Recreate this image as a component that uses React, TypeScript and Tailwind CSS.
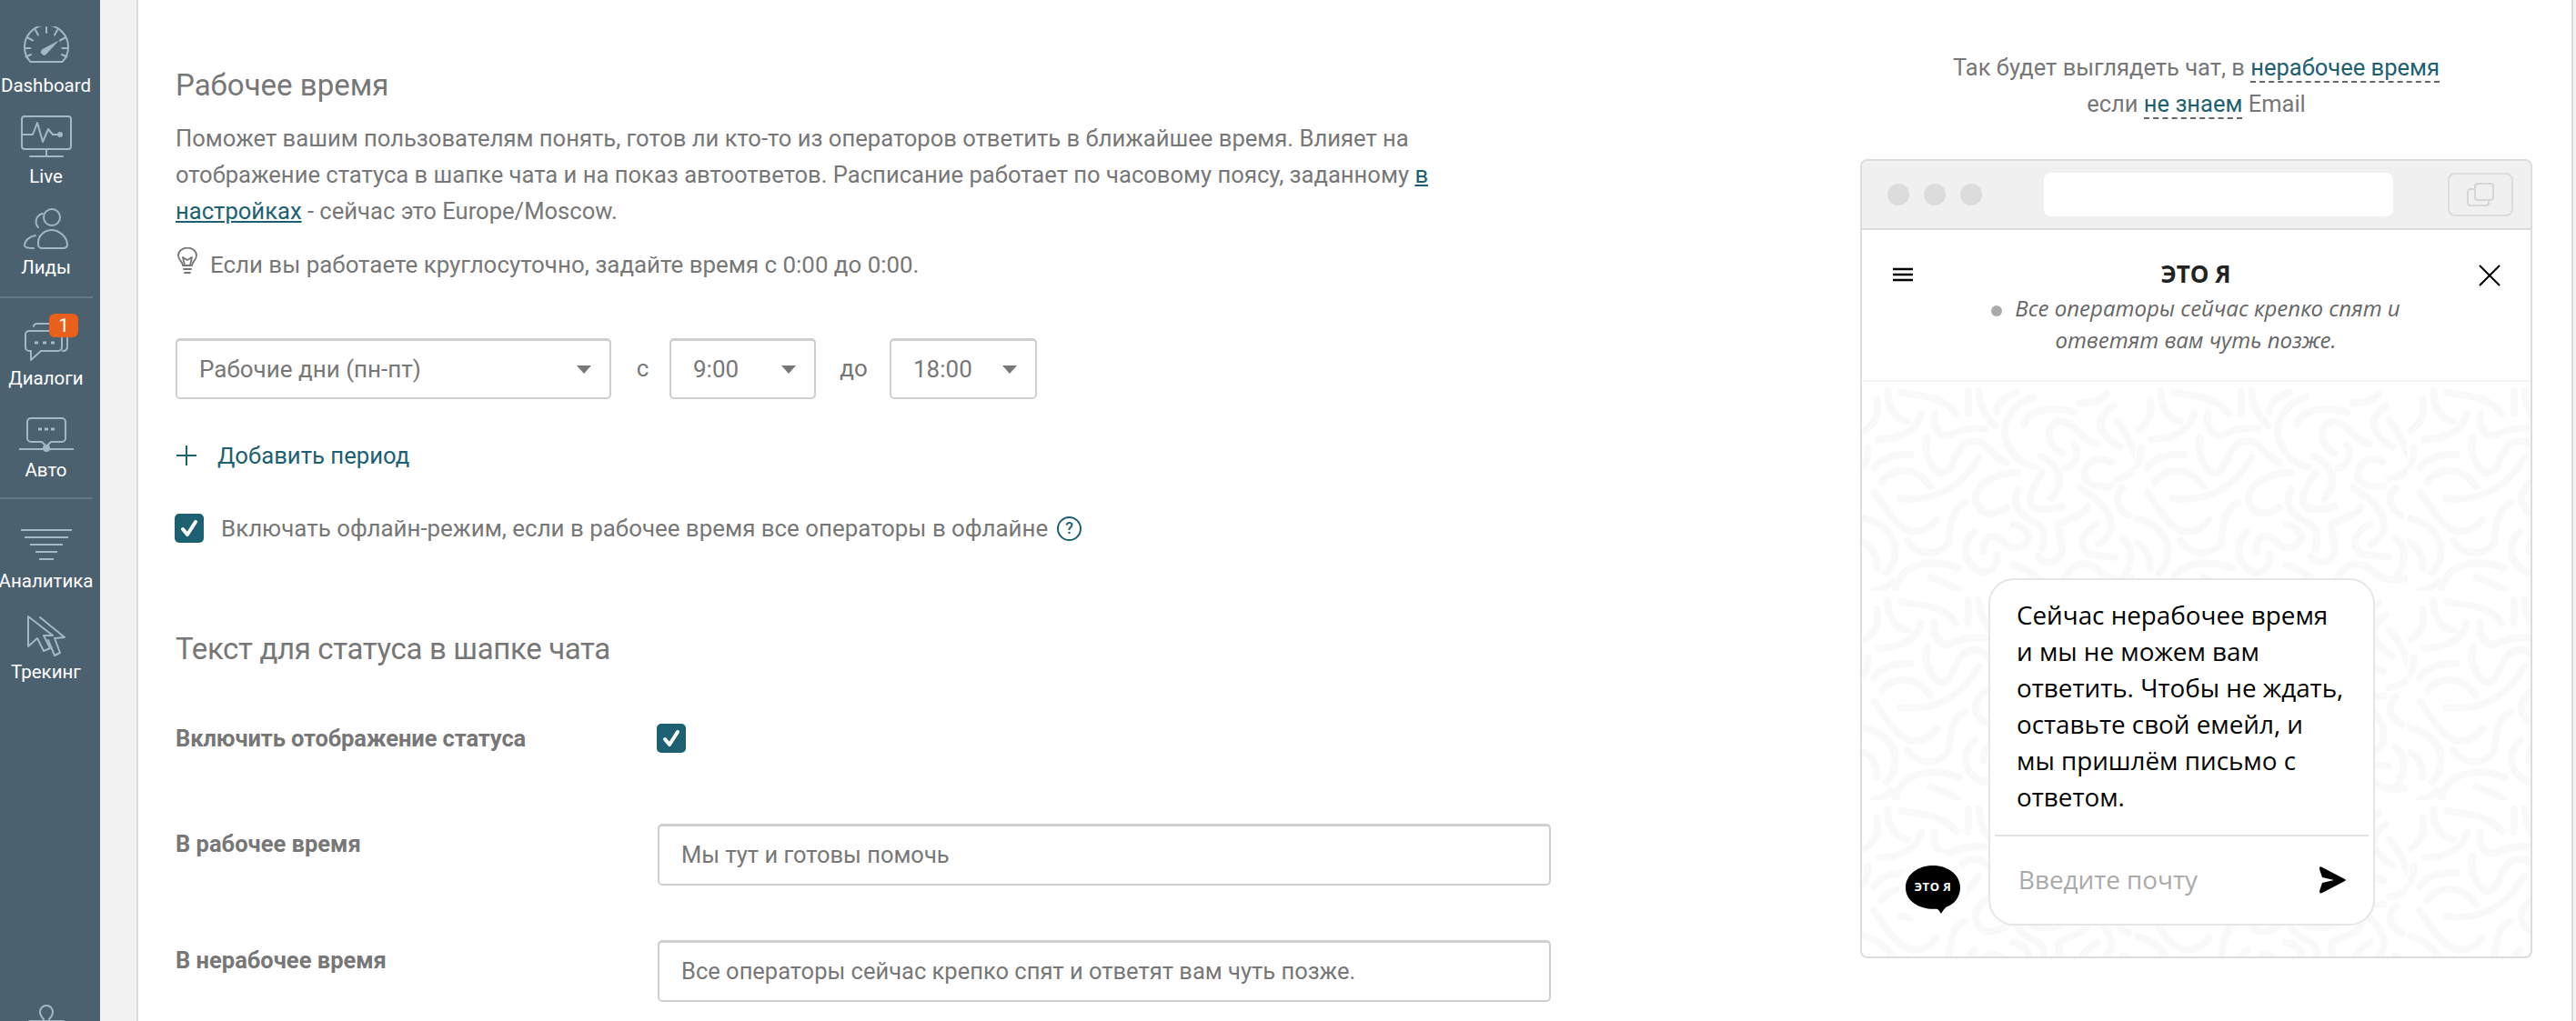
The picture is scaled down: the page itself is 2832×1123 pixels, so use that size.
import type { ReactNode } from "react";

const STROKE = "#a2b8c5";

function Gauge() {
  return (
    <svg width="50" height="40" viewBox="0 0 50 40" fill="none" stroke={STROKE} strokeWidth="2" strokeLinecap="round">
      <path d="M7.5 39 A24 24 0 1 1 42.5 39 Z" strokeLinejoin="round" />
      <path d="M25 1v6M13 4l3 5.5M4.5 12.5 10 15.5M1 24h6.5M2.5 33.5 8 31M37 4l-3 5.5M45.5 12.5 40 15.5M49 24h-6.5M47.5 33.5 42 31" />
      <path d="M37 17 25 30a3 3 0 0 1-5-4Z" fill={STROKE} strokeWidth="1" strokeLinejoin="round" />
    </svg>
  );
}
function Monitor() {
  return (
    <svg width="56" height="46" viewBox="0 0 56 46" fill="none" stroke={STROKE} strokeWidth="2" strokeLinecap="round" strokeLinejoin="round">
      <rect x="1" y="1" width="54" height="36" rx="3" />
      <path d="M28 37v8M10 45h36" />
      <path d="M1 21h12l5-13 6 21 6-14 5 6h8" />
      <circle cx="43" cy="21" r="3" fill={STROKE} stroke="none" />
    </svg>
  );
}
function People() {
  return (
    <svg width="50" height="46" viewBox="0 0 50 46" fill="none" stroke={STROKE} strokeWidth="2" strokeLinecap="round" strokeLinejoin="round">
      <circle cx="31" cy="10" r="9" />
      <path d="M21 6a9 9 0 0 0-5 15" />
      <path d="M19 44c-3-1-3-3-3-6 0-8 7-14 15-14s17 8 17 16c0 3-2 4-5 4Z" />
      <path d="M13 30C6 31 1 36 1 41c0 2 2 3 10 3" />
    </svg>
  );
}
function Chats() {
  return (
    <svg width="48" height="44" viewBox="0 0 48 44" fill="none" stroke={STROKE} strokeWidth="2" strokeLinecap="round" strokeLinejoin="round">
      <path d="M5 10h32a4 4 0 0 1 4 4v14a4 4 0 0 1-4 4H18L7 42v-10H5a4 4 0 0 1-4-4V14a4 4 0 0 1 4-4Z" />
      <path d="M10 5c0-2 2-3 4-3h18" />
      <path d="M47 17v10c0 3-2 5-5 5" />
      <path d="M11 23h4M20 23h4M29 23h4" strokeWidth="3" strokeLinecap="butt" />
    </svg>
  );
}
function Auto() {
  return (
    <svg width="60" height="40" viewBox="0 0 60 40" fill="none" stroke={STROKE} strokeWidth="2" strokeLinecap="round" strokeLinejoin="round">
      <path d="M13 1h34a4 4 0 0 1 4 4v18a4 4 0 0 1-4 4H35l-5 5-5-5H13a4 4 0 0 1-4-4V5a4 4 0 0 1 4-4Z" />
      <path d="M0 35h60" strokeLinecap="butt" />
      <circle cx="30" cy="34" r="4" fill={STROKE} stroke="none" />
      <path d="M21 13h4M28 13h4M35 13h4" strokeWidth="3" strokeLinecap="butt" />
    </svg>
  );
}
function Funnel() {
  return (
    <svg width="56" height="34" viewBox="0 0 56 34" fill="none" stroke={STROKE} strokeWidth="2">
      <path d="M0 1h56M4 9h48M10 17h36M16 25h24M20 33h16" />
    </svg>
  );
}
function Cursors() {
  return (
    <svg width="42" height="46" viewBox="0 0 42 46" fill="none" stroke={STROKE} strokeWidth="2" strokeLinecap="round" strokeLinejoin="round">
      <path d="M1 1v33l10-9 7 14 7-3-7-14h10Z" />
      <path d="M14 2l27 22-11 1 6 16-6 3-7-17" />
    </svg>
  );
}
function Clip() {
  return (
    <svg width="42" height="40" viewBox="0 0 42 40" fill="none" stroke={STROKE} strokeWidth="2" strokeLinecap="round" strokeLinejoin="round">
      <path d="M18 16c-3-3-4-5-4-8a7 7 0 0 1 14 0c0 3-1 5-4 8" />
      <path d="M3 17h36a3 3 0 0 1 3 3v20H0V20a3 3 0 0 1 3-3Z" fill={STROKE} stroke="none" />
    </svg>
  );
}

function NavItem({ icon, label, className }: { icon: ReactNode; label: string; className: string }) {
  return (
    <div className={`flex w-[101px] flex-col items-center ${className}`}>
      {icon}
      <span className="h-[30px] text-center text-[20.5px] leading-[30px] whitespace-nowrap text-white">{label}</span>
    </div>
  );
}

function Sidebar() {
  return (
    <aside className="flex h-full w-[110px] shrink-0 flex-col overflow-hidden bg-[#4b6170]">
      <NavItem className="pt-[29px]" icon={<div className="mb-[10px] flex h-[40px]"><Gauge /></div>} label="Dashboard" />
      <NavItem className="pt-[18px]" icon={<div className="mb-[6px] flex h-[46px]"><Monitor /></div>} label="Live" />
      <NavItem className="pt-[20px]" icon={<div className="mb-[4px] flex h-[46px]"><People /></div>} label="Лиды" />
      <div className="mt-[17px] h-[2px] w-[102px] bg-[#62788a]" />
      <div className="relative">
        <NavItem className="pt-[26px]" icon={<div className="mb-[3px] flex h-[44px]"><Chats /></div>} label="Диалоги" />
        <span className="absolute top-[17px] left-[54px] flex h-[26px] w-[32px] items-center justify-center rounded-[6px] bg-[#e8601c] text-[20px] leading-none text-white">1</span>
      </div>
      <NavItem className="pt-[28px]" icon={<div className="mb-[3px] flex h-[40px]"><Auto /></div>} label="Авто" />
      <div className="mt-[15px] h-[2px] w-[102px] bg-[#62788a]" />
      <NavItem className="pt-[33px]" icon={<div className="mb-[8px] flex h-[34px]"><Funnel /></div>} label="Аналитика" />
      <NavItem className="pt-[23px]" icon={<div className="mb-[2px] flex h-[45px]"><Cursors /></div>} label="Трекинг" />
      <div className="mt-auto -mb-[22px] flex w-[101px] justify-center"><Clip /></div>
    </aside>
  );
}

function Check() {
  return (
    <span className="flex h-[32px] w-[32px] shrink-0 items-center justify-center rounded-[5px] bg-[#1d6071]">
      <svg width="24" height="24" viewBox="0 0 24 24" fill="none" stroke="#fff" strokeWidth="4" strokeLinecap="round" strokeLinejoin="round">
        <path d="M5 13l5 6 9-14" />
      </svg>
    </span>
  );
}

function Select({ value, className }: { value: string; className: string }) {
  return (
    <div className={`flex h-[67px] shrink-0 items-center justify-between rounded-[5px] border-2 border-t-[3px] border-[#cfcfcf] bg-white pr-[20px] pl-[24px] ${className}`}>
      <span className="text-[26px] text-[#777]">{value}</span>
      <span className="h-0 w-0 border-x-[8px] border-t-[9px] border-x-transparent border-t-[#777]" />
    </div>
  );
}

function Field({ value }: { value: string }) {
  return (
    <div className="flex h-[68px] w-[982px] shrink-0 items-center rounded-[5px] border-2 border-t-[3px] border-[#cfcfcf] bg-white pl-[24px]">
      <span className="text-[25.5px] whitespace-nowrap text-[#777]">{value}</span>
    </div>
  );
}

function LeftColumn() {
  return (
    <div className="w-[1600px] shrink-0 pt-[69px] pl-[41px]">
      <h2 className="text-[33px] leading-[50px] font-normal text-[#777]">Рабочее время</h2>
      <p className="mt-[13px] w-[1500px] text-[25.6px] leading-[40px] text-[#777]">
        Поможет вашим пользователям понять, готов ли кто-то из операторов ответить в ближайшее время. Влияет на
        <br />
        отображение статуса в шапке чата и на показ автоответов. Расписание работает по часовому поясу, заданному{" "}
        <a className="text-[#1d6071] underline">в</a>
        <br />
        <a className="text-[#1d6071] underline">настройках</a> - сейчас это Europe/Moscow.
      </p>
      <div className="mt-[19px] flex h-[40px] items-center gap-[12px]">
        <svg width="26" height="30" viewBox="0 0 26 30" fill="none" stroke="#777" strokeWidth="1.8" strokeLinecap="round" strokeLinejoin="round" className="-mt-[8px] shrink-0">
          <path d="M8 20c0-4-5-6-5-11a10 8.5 0 0 1 20 0c0 5-5 7-5 11Z" />
          <path d="M10 20l-2-9 5 3 5-3-2 9M9 24h8M10 28h6" />
        </svg>
        <span className="text-[25.9px] text-[#777]">Если вы работаете круглосуточно, задайте время с 0:00 до 0:00.</span>
      </div>
      <div className="mt-[61px] flex items-center text-[26px] text-[#777]">
        <Select value="Рабочие дни (пн-пт)" className="w-[479px]" />
        <span className="w-[64px] shrink-0 pl-[5px] text-center">с</span>
        <Select value="9:00" className="w-[161px]" />
        <span className="w-[81px] shrink-0 pl-[2px] text-center">до</span>
        <Select value="18:00" className="w-[162px]" />
      </div>
      <div className="mt-[42px] flex h-[40px] items-center gap-[22px] text-[25.7px] text-[#1d6071]">
        <svg width="24" height="24" viewBox="0 0 24 24" stroke="#1d6071" strokeWidth="2"><path d="M12 1v22M1 12h22" /></svg>
        <span>Добавить период</span>
      </div>
      <div className="mt-[44px] -ml-[1px] flex h-[32px] items-center gap-[19px] text-[25.9px] text-[#777]">
        <Check />
        <span className="whitespace-nowrap">Включать офлайн-режим, если в рабочее время все операторы в офлайне</span>
        <span className="-ml-[9px] flex h-[27px] w-[27px] shrink-0 items-center justify-center rounded-full border-2 border-[#1d6071] text-[18px] leading-none font-medium text-[#1d6071]">?</span>
      </div>
      <h2 className="mt-[92px] text-[33px] leading-[50px] font-normal tracking-[-0.35px] text-[#777]">Текст для статуса в шапке чата</h2>
      <div className="mt-[57px] flex h-[32px] items-center">
        <span className="w-[529px] shrink-0 text-[25.5px] font-bold tracking-[-0.1px] text-[#777]">Включить отображение статуса</span>
        <Check />
      </div>
      <div className="mt-[78px] flex items-start">
        <span className="w-[530px] shrink-0 pt-[2px] text-[25.5px] leading-[40px] font-bold text-[#777]">В рабочее время</span>
        <Field value="Мы тут и готовы помочь" />
      </div>
      <div className="mt-[60px] flex items-start">
        <span className="w-[530px] shrink-0 pt-[2px] text-[25.5px] leading-[40px] font-bold text-[#777]">В нерабочее время</span>
        <Field value="Все операторы сейчас крепко спят и ответят вам чуть позже." />
      </div>
    </div>
  );
}

const SQUIGGLES = [
  "M85 30C85 90 110 120 150 130", "M195 105C190 150 130 190 55 190", "M350 30V105", "M385 30C390 80 410 120 440 145",
  "M240 105C230 150 260 185 290 175C330 155 370 150 405 155", "M130 35C190 50 260 40 310 105", "M445 100C440 70 470 50 510 35",
  "M565 50C500 70 470 120 470 170C480 230 520 270 570 280", "M535 140C550 90 620 80 700 100", "M720 70C760 70 790 60 805 40",
  "M660 235C610 210 600 150 650 130C700 130 730 200 775 205", "M700 210C720 240 700 280 670 285", "M590 245C640 270 680 320 625 385",
  "M595 300C570 340 540 380 560 410C590 430 630 420 660 410", "M830 80C780 110 760 160 850 215", "M840 130C870 160 890 210 900 240",
  "M820 265C770 240 730 270 735 310C740 340 780 350 820 345", "M840 320C870 315 890 300 900 290",
  "M215 185C200 240 240 310 270 300C310 290 300 200 370 195C410 190 440 260 475 265", "M160 240C120 235 60 250 40 285",
  "M65 330C100 280 180 280 225 345", "M385 250C350 310 280 400 125 385", "M515 300C440 300 370 340 375 390C390 450 440 440 475 415",
  "M40 365C80 420 120 490 170 495C210 495 235 470 245 455", "M340 400C300 410 290 470 285 530C260 570 190 580 150 525",
  "M515 355C490 410 520 440 580 470C610 490 600 520 595 550", "M720 350C790 390 830 440 820 490C810 520 790 530 780 535",
  "M745 410C740 440 680 450 650 470C640 510 680 540 650 580C620 610 590 590 580 575", "M775 470C720 500 710 540 750 570L835 578",
  "M860 350C830 380 840 420 880 440", "M370 495C330 530 330 600 395 630C440 625 450 590 445 570",
  "M400 560C400 510 430 490 470 530C490 560 540 550 550 510C540 480 510 470 500 470", "M860 515C890 540 900 590 860 650",
  "M0 450C60 460 110 500 110 560C110 600 90 620 80 630", "M0 530C30 540 50 570 50 615", "M320 615C260 590 170 590 130 640C110 670 110 690 115 690",
  "M225 645C270 660 310 680 320 690", "M500 605C530 610 580 640 600 670", "M665 660C690 590 740 590 780 620C810 650 840 660 890 650",
  "M100 660C80 680 60 685 40 690", "M50 60C60 110 40 140 10 160", "M20 220C20 260 10 270 5 275",
];

function Preview() {
  return (
    <div className="flex h-[879px] w-[739px] flex-col overflow-hidden rounded-[8px] border-2 border-[#dcdcdc] bg-white" style={{ fontFamily: '"Open Sans", sans-serif' }}>
      <div className="flex h-[76px] shrink-0 items-center border-b-2 border-[#dcdcdc] bg-[#f0f0f0] pl-[28px]">
        <span className="h-[24px] w-[24px] rounded-full bg-[#dcdcdc]" />
        <span className="ml-[16px] h-[24px] w-[24px] rounded-full bg-[#dcdcdc]" />
        <span className="ml-[16px] h-[24px] w-[24px] rounded-full bg-[#dcdcdc]" />
        <span className="ml-[68px] h-[48px] w-[384px] rounded-[8px] bg-white" />
        <span className="ml-[60px] flex h-[48px] w-[72px] items-center justify-center rounded-[8px] border-2 border-[#dcdcdc]">
          <svg width="32" height="26" viewBox="0 0 32 26" fill="none" stroke="#d6d6d6" strokeWidth="2" strokeLinejoin="round">
            <rect x="10" y="1" width="20" height="18" rx="3" />
            <path d="M10 7H5a3 3 0 0 0-3 3v12a3 3 0 0 0 3 3h17a3 3 0 0 0 3-3v-3" />
          </svg>
        </span>
      </div>
      <div className="flex h-[167px] shrink-0 items-start border-b-2 border-[#f5f5f5] pt-[29px] pr-[33px] pl-[34px]">
        <svg width="22" height="16" viewBox="0 0 22 16" stroke="#000" strokeWidth="2.4" className="mt-[12px] shrink-0"><path d="M0 2h22M0 8h22M0 14h22" /></svg>
        <div className="flex-1 text-center">
          <div className="text-[26px] leading-[38px] font-bold text-[#222]">ЭТО Я</div>
          <div className="relative mt-[1px] text-[24px] leading-[35px] text-[#666] italic">
            <span className="mr-[14px] inline-block h-[12px] w-[12px] rounded-full bg-[#aaa] align-middle" />
            Все операторы сейчас крепко спят и
            <br />
            ответят вам чуть позже.
          </div>
        </div>
        <svg width="24" height="24" viewBox="0 0 24 24" stroke="#000" strokeWidth="2" className="mt-[9px] shrink-0"><path d="M1 1l22 22M23 1L1 23" /></svg>
      </div>
      <div className="relative flex flex-1 items-end pb-[34px] pl-[48px]">
        <svg className="absolute inset-0 h-full w-full" aria-hidden>
          <defs>
            <pattern id="sq" patternUnits="userSpaceOnUse" width="300" height="230">
              <g transform="scale(0.3333)" fill="none" stroke="#f9f9f9" strokeWidth="24" strokeLinecap="round">
                {SQUIGGLES.map((d) => <path key={d} d={d} />)}
              </g>
            </pattern>
          </defs>
          <rect width="100%" height="100%" fill="url(#sq)" />
        </svg>
        <div className="relative mb-[13px] h-[53px] w-[60px] shrink-0">
          <div className="absolute -top-[15px] -left-[7px] h-[80px] w-[74px] rounded-full bg-white" />
          <svg width="60" height="53" viewBox="0 0 60 50" preserveAspectRatio="none" className="absolute top-0 left-0">
            <path d="M30 0C47 0 60 10 60 23c0 10-7 17-15 20-2 1-4 4-6 7-2-3-3-5-5-5C14 46 0 36 0 23 0 10 13 0 30 0Z" fill="#000" />
          </svg>
          <span className="absolute inset-x-0 top-[14px] text-center text-[13px] leading-[18px] font-bold tracking-[0.5px] text-white">ЭТО Я</span>
        </div>
        <div className="relative ml-[31px] w-[425px] rounded-[28px] border-2 border-[#e6e6e6] bg-white">
          <div className="px-[29px] pt-[18px] pb-[22px] text-[27.8px] leading-[40px] whitespace-nowrap text-[#000]">
            Сейчас нерабочее время
            <br />и мы не можем вам
            <br />ответить. Чтобы не ждать,
            <br />оставьте свой емейл, и
            <br />мы пришлём письмо с
            <br />ответом.
          </div>
          <div className="mx-[5px] h-[2px] bg-[#e2e2e2]" />
          <div className="flex h-[96px] items-center justify-between pr-[29px] pl-[31px]">
            <span className="text-[27.8px] text-[#aaa]">Введите почту</span>
            <svg width="32" height="32" viewBox="0 0 32 32" fill="#000"><path d="M2 2c1-1 2-1 3 0l25 13c1 .6 1 1.4 0 2L5 30c-2 1-3 0-3-2l3-9 13-3-13-3-3-9c0-1 0-2 0-2Z" /></svg>
          </div>
        </div>
      </div>
    </div>
  );
}

function RightColumn() {
  return (
    <div className="ml-auto mr-[43px] flex w-[739px] shrink-0 flex-col">
      <div className="pt-[54px] text-center text-[25.5px] leading-[40px] whitespace-nowrap text-[#777]">
        Так будет выглядеть чат, в <span className="border-b-2 border-dashed border-[#666] text-[#1d6071]">нерабочее время</span>
        <br />
        если <span className="border-b-2 border-dashed border-[#666] text-[#1d6071]">не знаем</span> Email
      </div>
      <div className="mt-[41px]"><Preview /></div>
    </div>
  );
}

export default function App() {
  return (
    <div className="flex h-[1123px] w-[2832px] overflow-hidden bg-[#f2f2f2]" style={{ fontFamily: 'Roboto, "Noto Sans", sans-serif' }}>
      <Sidebar />
      <div className="w-[40px] shrink-0" />
      <main className="flex h-full w-[2679px] shrink-0 border-x-2 border-[#dcdcdc] bg-white">
        <LeftColumn />
        <RightColumn />
      </main>
    </div>
  );
}
